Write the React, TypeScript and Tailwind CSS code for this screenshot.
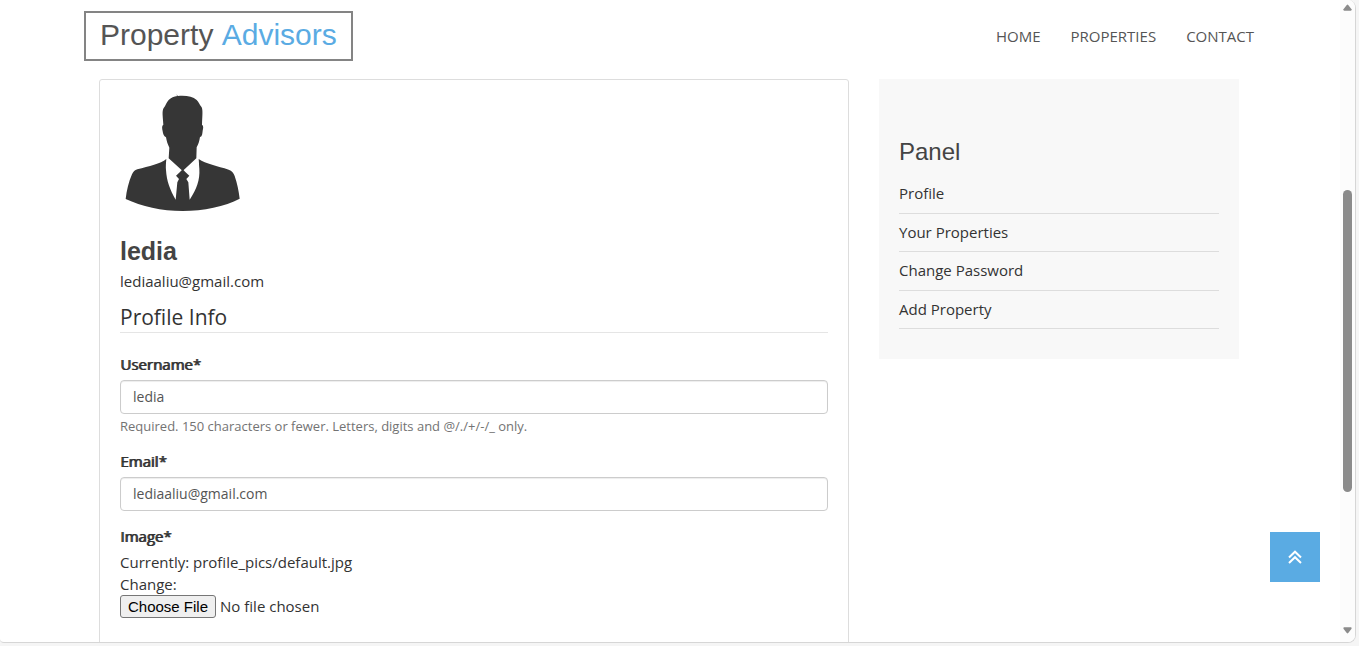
import React from "react";

const navLinks = ["Home", "Properties", "Contact"];
const panelLinks = ["Profile", "Your Properties", "Change Password", "Add Property"];

function Header() {
  return (
    <header className="flex items-center justify-between pt-[11px]">
      <a
        href="#"
        className="flex h-[50px] items-center border-2 border-[#848484] px-[14px] pb-[3px] font-['Liberation_Sans',Arial,sans-serif] text-[30px] leading-[30px] whitespace-pre text-[#555]"
      >
        Property <span className="text-[#5aabe3]">Advisors</span>
      </a>
      <nav className="flex gap-[30px]">
        {navLinks.map((label) => (
          <a key={label} href="#" className="text-[#555] uppercase">
            {label}
          </a>
        ))}
      </nav>
    </header>
  );
}

function Avatar() {
  return (
    <svg viewBox="60 30 375 375" className="size-[125px]" role="img" aria-label="ledia">
      <path
        fill="#363636"
        d="M228 43L234 48C260 46 278 50 290 60C296 65 298 74 305 82C309 91 307 107 306 134C311 137 310 144 308 152C307 162 306 170 300 171C298 184 295 193 290 202L289 235L248 273L206 235L208 203C203 193 200 184 198 172C191 170 189 161 188 154C186 145 185 137 190 134C189 110 185 94 191 84C197 77 199 68 206 60C213 53 222 49 232 48Z"
      />
      <path
        fill="#363636"
        d="M199 237C198 248 197 260 198 270C200 304 210 329 227 359L232 307L237 297L228 287L240 276L248 268L256 276L268 287L259 297L265 307L269 359C290 327 300 300 298 266C297 254 297 247 296 237C317 252 353 258 386 269C396 272 401 279 404 288C412 311 416 332 419 356C375 379 310 393 248 393C185 393 124 379 77 357C80 331 86 306 96 283C100 275 104 271 112 268C147 259 182 251 199 237Z"
      />
    </svg>
  );
}

const labelClass = "block leading-[22px] text-[#333] [text-shadow:1px_0_0_currentColor]";
const inputClass =
  "mt-[5px] block h-[34px] w-full rounded-[4px] border border-[#ccc] bg-white px-3 pb-px text-[14px] text-[#555] shadow-[inset_0_1px_1px_rgba(0,0,0,0.075)]";

function ProfileCard() {
  return (
    <main className="min-w-0 flex-1 rounded-[3px] border border-[#ddd] px-5 pt-[10px] pb-10">
      <Avatar />
      <h1 className="mt-[21px] font-['Liberation_Sans',Arial,sans-serif] text-[25px] leading-[30px] font-bold text-[#444]">
        ledia
      </h1>
      <p className="mt-1 leading-[22px]">lediaaliu@gmail.com</p>
      <form className="mt-[10px]">
        <fieldset>
          <legend className="mb-5 w-full border-b border-[#e5e5e5] text-[21px] leading-[30px]">
            Profile Info
          </legend>
          <div>
            <label htmlFor="username" className={labelClass}>
              Username*
            </label>
            <input id="username" type="text" defaultValue="ledia" className={inputClass} />
            <p className="mt-[2px] text-[13px] leading-5 text-[#737373]">
              Required. 150 characters or fewer. Letters, digits and @/./+/-/_ only.
            </p>
          </div>
          <div className="mt-[14px]">
            <label htmlFor="email" className={labelClass}>
              Email*
            </label>
            <input id="email" type="email" defaultValue="lediaaliu@gmail.com" className={inputClass} />
          </div>
          <div className="mt-[14px]">
            <label htmlFor="image" className={labelClass}>
              Image*
            </label>
            <p className="mt-1 leading-[22px]">
              Currently: <a href="#">profile_pics/default.jpg</a>
            </p>
            <p className="leading-[22px]">Change:</p>
            <input
              id="image"
              type="file"
              className="block w-full text-[15px] leading-[23px] file:mr-1 file:h-[23px] file:rounded-[3px] file:border file:border-solid file:border-[#767676] file:bg-[#efefef] file:px-[7px] file:font-['Liberation_Sans',Arial,sans-serif] file:text-[15px] file:leading-[17px] file:text-black"
            />
          </div>
        </fieldset>
      </form>
    </main>
  );
}

function Panel() {
  return (
    <aside className="w-[360px] shrink-0 self-start bg-[#f8f8f8] px-5 pt-[58px] pb-[30px]">
      <h2 className="mb-2 font-['Liberation_Sans',Arial,sans-serif] text-[24px] leading-[30px] text-[#444]">Panel</h2>
      <ul className="grid h-[154px] grid-rows-4">
        {panelLinks.map((label) => (
          <li key={label} className="flex items-center border-b border-[#ddd] pb-px">
            <a href="#">{label}</a>
          </li>
        ))}
      </ul>
    </aside>
  );
}

function ScrollBar() {
  return (
    <div className="flex w-[15px] shrink-0 flex-col items-center bg-[#fcfcfc] pt-1 pb-2" aria-hidden="true">
      <svg viewBox="0 0 10 8" className="h-2 w-[9px]">
        <path d="M4.2 0.6Q5 -0.2 5.8 0.6L9.5 5.5Q9.8 7 8.6 7H1.4Q0.2 7 0.5 5.5Z" fill="#8b8b8b" />
      </svg>
      <div className="w-[9px] grow-[178] basis-0" />
      <div className="w-[9px] grow-[302] basis-0 rounded-full bg-[#8b8b8b]" />
      <div className="w-[9px] grow-[134] basis-0" />
      <svg viewBox="0 0 10 8" className="h-2 w-[9px]">
        <path d="M4.2 7.4Q5 8.2 5.8 7.4L9.5 2.5Q9.8 1 8.6 1H1.4Q0.2 1 0.5 2.5Z" fill="#8b8b8b" />
      </svg>
    </div>
  );
}

export default function App() {
  return (
    <div className="flex h-screen overflow-hidden bg-[#f5f5f5] pr-[3px] pb-[3px] font-['Open_Sans','Noto_Sans',sans-serif] text-[15px] leading-[22px] text-[#333]">
      <div className="relative flex min-w-0 flex-1 overflow-hidden rounded-r-lg rounded-bl border-r border-b border-[#d6d6d6] bg-white">
        <div className="min-w-0 flex-1 overflow-hidden pr-[2px]">
          <div className="mx-auto max-w-[1170px]">
            <Header />
            <div className="mt-[18px] flex gap-[30px] px-[15px]">
              <ProfileCard />
              <Panel />
            </div>
          </div>
        </div>
        <ScrollBar />
        <button
          type="button"
          aria-label="Back to top"
          className="absolute right-[35px] bottom-[60px] flex size-[50px] items-center justify-center bg-[#5aabe3]"
        >
          <svg viewBox="0 0 14 14" className="size-[14px]" fill="none" stroke="#fff" strokeWidth="2">
            <path d="M1 7.5L7 1.7L13 7.5M1 13L7 7.2L13 13" />
          </svg>
        </button>
      </div>
    </div>
  );
}
